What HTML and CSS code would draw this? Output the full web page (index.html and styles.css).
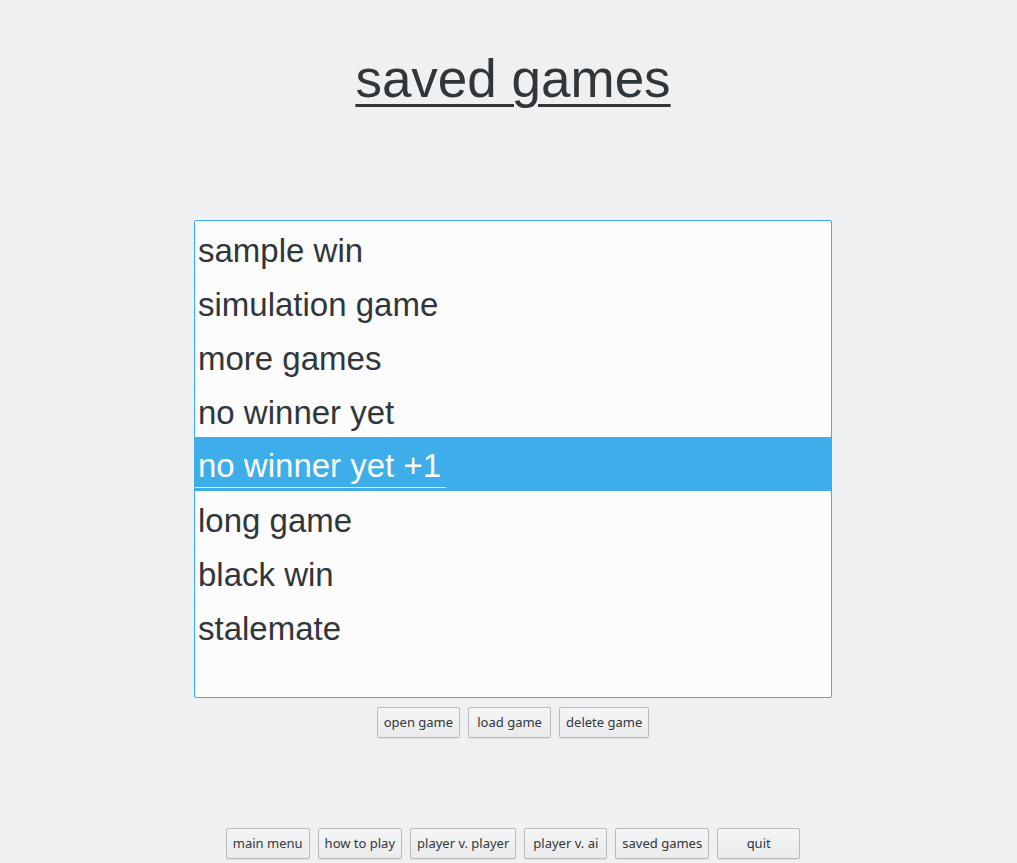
FILE: index.html
```
<!DOCTYPE html>
<html>
<head>
<meta charset="utf-8">
<link rel="stylesheet" href="styles.css">
</head>
<body>
<div class="page">
  <h1 class="title">saved games</h1>
  <div class="list">
    <div class="row">sample win</div>
    <div class="row">simulation game</div>
    <div class="row">more games</div>
    <div class="row">no winner yet</div>
    <div class="row sel"><span class="edit">no winner yet +1</span></div>
    <div class="row">long game</div>
    <div class="row">black win</div>
    <div class="row">stalemate</div>
  </div>
  <div class="actions">
    <button class="btn">open game</button>
    <button class="btn">load game</button>
    <button class="btn">delete game</button>
  </div>
  <div class="nav">
    <button class="btn">main menu</button>
    <button class="btn">how to play</button>
    <button class="btn">player v. player</button>
    <button class="btn">player v. ai</button>
    <button class="btn">saved games</button>
    <button class="btn">quit</button>
  </div>
</div>
</body>
</html>
```
FILE: styles.css
```
html, body {
  margin: 0;
  padding: 0;
  background: #eff0f1;
}
body {
  width: 1017px;
  height: 863px;
  overflow: hidden;
  color: #31363b;
  font-family: "Liberation Sans", Arial, sans-serif;
}
.page {
  padding-left: 9px;
  display: flex;
  flex-direction: column;
  align-items: center;
}
.title {
  margin: 49px 0 0 0;
  font-size: 53px;
  font-weight: normal;
  line-height: 60px;
  text-decoration: underline;
  text-decoration-thickness: 3px;
  text-underline-offset: 7px;
}
.list {
  margin-top: 111px;
  width: 638px;
  height: 478px;
  box-sizing: border-box;
  border: 1px solid #3daee9;
  border-radius: 2px;
  background: #fcfcfc;
  font-size: 33px;
}
.row {
  height: 54px;
  box-sizing: border-box;
  padding: 5px 0 0 3px;
  line-height: 49px;
  white-space: nowrap;
}
.row.sel {
  padding: 0;
  background: #3daee9;
  color: #fcfcfc;
}
.edit {
  display: inline-block;
  padding: 7px 5px 0 3px;
  line-height: 43px;
  border-bottom: 1px solid #eff0f1;
}
.actions {
  margin-top: 9px;
  display: flex;
  gap: 8px;
}
.nav {
  margin-top: 90px;
  display: flex;
  gap: 8px;
}
.btn {
  height: 31px;
  min-width: 83px;
  box-sizing: border-box;
  padding: 0 6px;
  margin: 0;
  border: 1px solid #b9bbbc;
  border-radius: 2px;
  background: linear-gradient(#f4f5f5, #eaebec);
  box-shadow: 0 1px 0 rgba(0,0,0,0.06);
  color: #31363b;
  font-family: "Noto Sans", sans-serif;
  font-size: 13px;
  line-height: 29px;
}
```
